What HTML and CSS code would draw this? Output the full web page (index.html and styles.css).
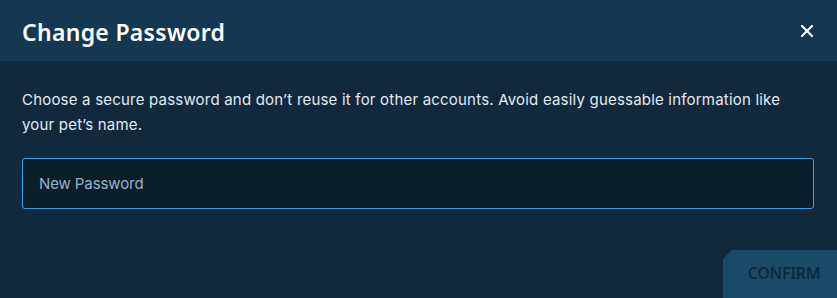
FILE: index.html
```html
<!DOCTYPE html>
<html>
<head>
<meta charset="utf-8">
<link rel="stylesheet" href="styles.css">
</head>
<body>
<div class="modal">
  <header class="modal-header">
    <h1 class="title">Change Password</h1>
    <button class="close" aria-label="Close">
      <svg width="12" height="12" viewBox="0 0 12 12"><path d="M1 1L11 11M11 1L1 11" stroke="#ffffff" stroke-width="2.2" stroke-linecap="square"/></svg>
    </button>
  </header>
  <div class="modal-body">
    <p class="desc">Choose a secure password and don’t reuse it for other accounts. Avoid easily guessable information like your pet’s name.</p>
    <div class="field"><span class="placeholder">New Password</span></div>
  </div>
  <div class="modal-footer">
    <button class="confirm">CONFIRM</button>
  </div>
</div>
</body>
</html>
```
FILE: styles.css
```css
html, body {
  margin: 0;
  padding: 0;
  background: #11293d;
}
.modal {
  width: 837px;
  height: 298px;
  display: flex;
  flex-direction: column;
  background: #11293d;
  overflow: hidden;
}
.modal-header {
  height: 61px;
  flex: none;
  background: #153852;
  display: flex;
  align-items: center;
  justify-content: space-between;
  padding: 0 24px 0 22px;
  box-sizing: border-box;
}
.title {
  margin: 0;
  font-family: "Noto Sans", sans-serif;
  font-weight: 600;
  font-size: 23px;
  color: #ffffff;
  letter-spacing: 0.3px;
  padding-top: 2px;
}
.close {
  background: none;
  border: 0;
  padding: 0;
  width: 12px;
  height: 12px;
  display: flex;
}
.modal-body {
  padding: 26px 23px 0 22px;
  flex: 1;
}
.desc {
  margin: 0;
  font-family: "Inter", sans-serif;
  font-size: 15px;
  line-height: 25px;
  color: #e2eaf0;
  letter-spacing: 0.2px;
}
.field {
  margin-top: 21px;
  height: 51px;
  box-sizing: border-box;
  border: 1px solid #3e9ee4;
  border-radius: 3px;
  background: #0c1d2a;
  display: flex;
  align-items: center;
  padding-left: 16px;
}
.placeholder {
  font-family: "Inter", sans-serif;
  font-size: 15px;
  color: #93b4cb;
  letter-spacing: -0.1px;
}
.modal-footer {
  display: flex;
  justify-content: flex-end;
  height: 48px;
  flex: none;
}
.confirm {
  width: 114px;
  height: 48px;
  border: 0;
  background: #1b4a68;
  clip-path: polygon(9px 0, 100% 0, 100% 100%, 0 100%, 0 9px);
  font-family: "Noto Sans", sans-serif;
  font-weight: 600;
  font-size: 16px;
  color: #0f2a3e;
  padding: 0 0 0 8px;
  display: flex;
  align-items: flex-start;
  padding-top: 12px;
  justify-content: center;
  letter-spacing: -0.3px;
}
```
